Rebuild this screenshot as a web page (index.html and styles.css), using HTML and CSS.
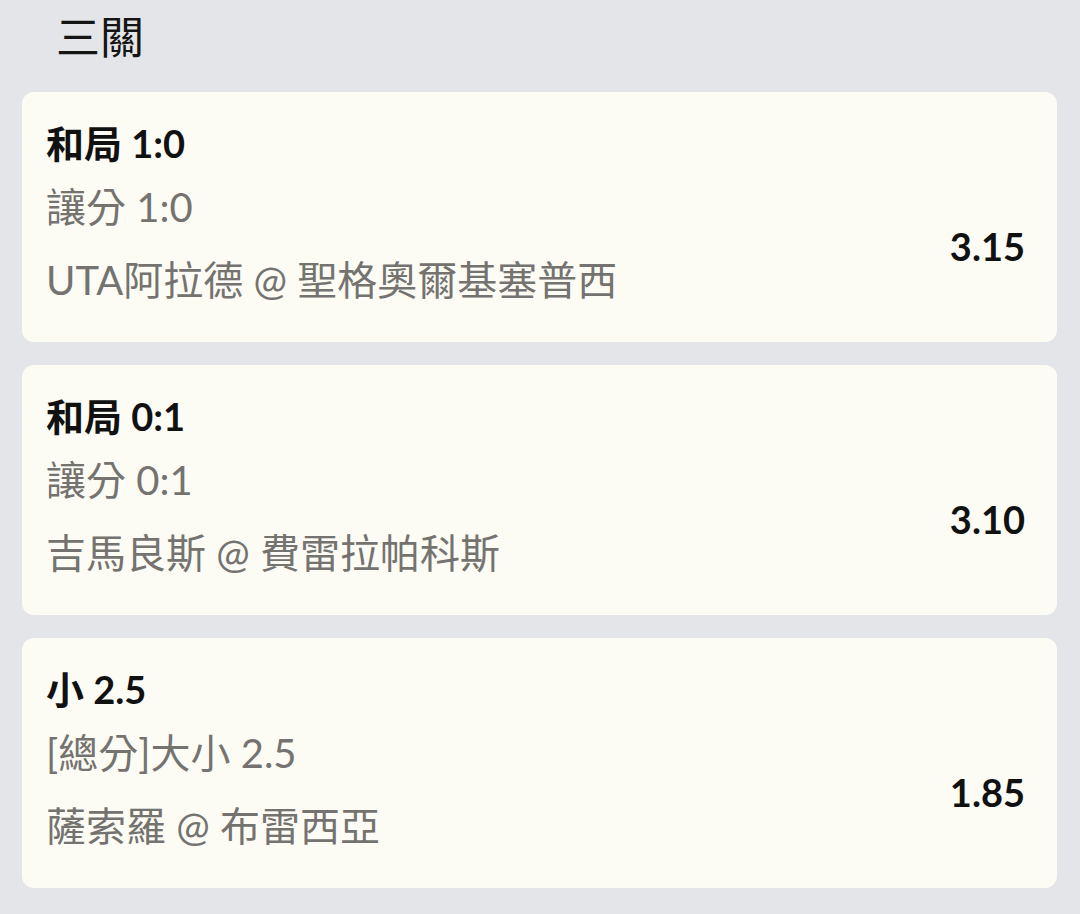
FILE: index.html
```html
<!DOCTYPE html>
<html lang="zh-Hant">
<head>
    <meta charset="UTF-8">
    <meta name="viewport" content="width=device-width, initial-scale=1.0">
    <title>三關</title>
    <link rel="stylesheet" href="styles.css">
</head>
<body>
    <header class="page-header">
        <h1>三關</h1>
    </header>

    <main class="bet-list">
        <section class="bet-card">
            <h2 class="bet-pick">和局 1:0</h2>
            <div class="bet-row">
                <div class="bet-info">
                    <p class="bet-market">讓分 1:0</p>
                    <p class="bet-match">UTA阿拉德 @ 聖格奧爾基塞普西</p>
                </div>
                <span class="bet-odds">3.15</span>
            </div>
        </section>

        <section class="bet-card">
            <h2 class="bet-pick">和局 0:1</h2>
            <div class="bet-row">
                <div class="bet-info">
                    <p class="bet-market">讓分 0:1</p>
                    <p class="bet-match">吉馬良斯 @ 費雷拉帕科斯</p>
                </div>
                <span class="bet-odds">3.10</span>
            </div>
        </section>

        <section class="bet-card">
            <h2 class="bet-pick">小 2.5</h2>
            <div class="bet-row">
                <div class="bet-info">
                    <p class="bet-market">[總分]大小 2.5</p>
                    <p class="bet-match">薩索羅 @ 布雷西亞</p>
                </div>
                <span class="bet-odds">1.85</span>
            </div>
        </section>
    </main>
</body>
</html>
```

FILE: styles.css
```css
* {
    margin: 0;
    padding: 0;
    box-sizing: border-box;
}

body {
    font-family: 'Lato', 'Noto Sans CJK TC', sans-serif;
    background-color: #e4e5e8;
    color: #111;
    min-height: 100vh;
}

.page-header {
    padding: 4px 0 0 56px;
    margin-bottom: 22px;
}

.page-header h1 {
    font-size: 44px;
    font-weight: 400;
    line-height: 66px;
    color: #151515;
}

.bet-list {
    display: flex;
    flex-direction: column;
    gap: 23px;
    padding: 0 23px 0 22px;
}

.bet-card {
    background-color: #fcfcf5;
    border-radius: 12px;
    padding: 24px 32px 35px 24px;
}

.bet-pick {
    font-size: 38px;
    font-weight: 700;
    line-height: 54px;
    color: #111;
    margin-bottom: 10px;
}

.bet-row {
    display: flex;
    align-items: center;
    justify-content: space-between;
}

.bet-info p {
    font-size: 40px;
    line-height: 54px;
    color: #747370;
}

.bet-market {
    margin-bottom: 19px;
}

.bet-odds {
    font-size: 38px;
    font-weight: 700;
    line-height: 54px;
    color: #111;
    margin-top: 4px;
}
```
